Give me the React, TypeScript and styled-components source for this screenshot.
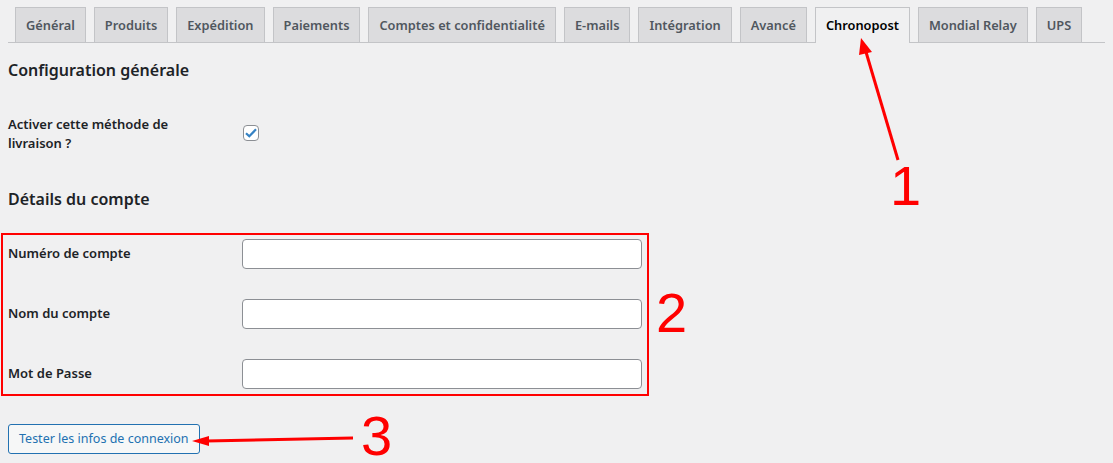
import React from 'react'
import styled, { createGlobalStyle } from 'styled-components'

const GlobalStyle = createGlobalStyle`
  html, body {
    margin: 0;
    padding: 0;
    background: #f0f0f1;
  }
  body {
    font-family: 'Noto Sans', 'Open Sans', sans-serif;
    color: #1d2327;
  }
`

const Page = styled.div`
  position: relative;
  width: 1113px;
  height: 463px;
  padding: 7px 8px 0 8px;
  box-sizing: border-box;
  overflow: hidden;
`

const TabBar = styled.nav`
  display: flex;
  border-bottom: 1px solid #c3c4c7;
  padding-left: 7px;
  gap: 8px;
`

const Tab = styled.a<{ $active?: boolean }>`
  display: block;
  padding: 5px 10px;
  font-size: 12.8px;
  line-height: 24px;
  font-weight: 600;
  border: 1px solid #c3c4c7;
  border-bottom: none;
  margin-bottom: ${({ $active }) => ($active ? '-1px' : '0')};
  padding-bottom: ${({ $active }) => ($active ? '6px' : '5px')};
  background: ${({ $active }) => ($active ? '#f0f0f1' : '#dcdcde')};
  color: ${({ $active }) => ($active ? '#000' : '#50575e')};
  white-space: nowrap;
  text-decoration: none;
`

const SectionTitle = styled.h2<{ $top: number }>`
  margin: ${({ $top }) => $top}px 0 0 0;
  font-size: 16px;
  line-height: 24px;
  font-weight: 600;
  color: #1d2327;
`

const Row = styled.div<{ $height: number }>`
  display: grid;
  grid-template-columns: 234px 400px;
  align-items: center;
  height: ${({ $height }) => $height}px;
`

const Label = styled.label<{ $width?: number }>`
  font-size: 13px;
  line-height: 19px;
  font-weight: 600;
  color: #1d2327;
  width: ${({ $width }) => ($width ? `${$width}px` : 'auto')};
`

const CheckBox = styled.span`
  display: flex;
  align-items: center;
  justify-content: center;
  width: 16px;
  height: 16px;
  box-sizing: border-box;
  border: 1px solid #8c8f94;
  border-radius: 4px;
  background: #fff;
  margin: -2px 0 0 1px;
`

const TextInput = styled.input`
  width: 400px;
  height: 30px;
  box-sizing: border-box;
  border: 1px solid #8c8f94;
  border-radius: 4px;
  background: #fff;
  padding: 0 8px;
  font: inherit;
  margin-top: 1px;
`

const Fields = styled.div`
  margin-top: 12px;
`

const Button = styled.button`
  margin-top: 21px;
  height: 30px;
  padding: 0 10px;
  border: 1px solid #2271b1;
  border-radius: 3px;
  background: #f6f7f7;
  color: #2271b1;
  font-family: inherit;
  font-size: 12.5px;
  line-height: 28px;
`

const Overlay = styled.svg`
  position: absolute;
  left: 0;
  top: 0;
  pointer-events: none;
`

const tabs = [
  'Général',
  'Produits',
  'Expédition',
  'Paiements',
  'Comptes et confidentialité',
  'E-mails',
  'Intégration',
  'Avancé',
  'Chronopost',
  'Mondial Relay',
  'UPS',
]

const accountFields = ['Numéro de compte', 'Nom du compte', 'Mot de Passe']

const Annotations = () => (
  <Overlay width={1113} height={463} viewBox="0 0 1113 463">
    <g stroke="#ff0000" fill="#ff0000">
      <line x1={898} y1={160} x2={866} y2={52} strokeWidth={3} />
      <polygon points="861,38 872,52 859,55" stroke="none" />
      <rect x={2} y={234} width={646} height={161} fill="none" strokeWidth={2} />
      <line x1={353} y1={438} x2={206} y2={441} strokeWidth={3} />
      <polygon points="192,441 209,436 209,446" stroke="none" />
    </g>
    <g fill="#ff0000" fontFamily="'Liberation Sans', Arial, sans-serif" fontSize={56}>
      <text x={890} y={205}>1</text>
      <text x={656} y={332}>2</text>
      <text x={361} y={455}>3</text>
    </g>
  </Overlay>
)

const App = () => (
  <Page>
    <GlobalStyle />
    <TabBar>
      {tabs.map((t) => (
        <Tab key={t} $active={t === 'Chronopost'}>
          {t}
        </Tab>
      ))}
    </TabBar>

    <SectionTitle $top={15}>Configuration générale</SectionTitle>

    <Row $height={38} style={{ marginTop: 33 }}>
      <Label $width={200}>Activer cette méthode de livraison ?</Label>
      <CheckBox>
        <svg width="12" height="10" viewBox="0 0 12 10">
          <path d="M1 5.2 L4.3 8.3 L11 1.3" fill="none" stroke="#3582c4" strokeWidth="2.2" />
        </svg>
      </CheckBox>
    </Row>

    <SectionTitle $top={34}>Détails du compte</SectionTitle>

    <Fields>
      {accountFields.map((f) => (
        <Row key={f} $height={60}>
          <Label>{f}</Label>
          <TextInput type={f === 'Mot de Passe' ? 'password' : 'text'} />
        </Row>
      ))}
    </Fields>

    <Button>Tester les infos de connexion</Button>

    <Annotations />
  </Page>
)

export default App
